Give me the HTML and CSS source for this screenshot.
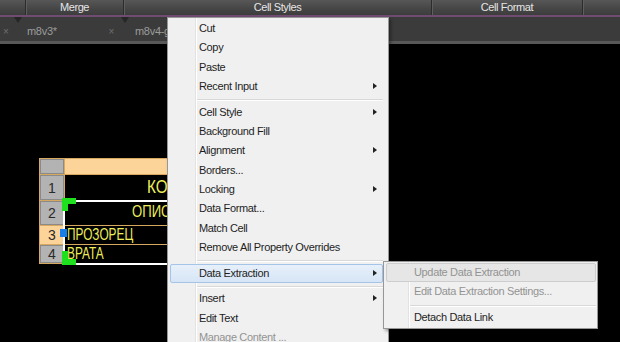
FILE: index.html
```html
<!DOCTYPE html>
<html lang="en">
<head>
    <meta charset="UTF-8">
    <meta name="viewport" content="width=device-width, initial-scale=1.0">
    <title>Table Cell - Context Menu</title>
    <link rel="stylesheet" href="styles.css">
</head>
<body>
    <div class="ribbon">
        <div class="panel panel-edge"></div>
        <div class="panel panel-merge">Merge</div>
        <div class="panel panel-styles">Cell Styles</div>
        <div class="panel panel-format">Cell Format</div>
        <div class="panel panel-rest"></div>
    </div>

    <div class="tabs">
        <div class="tab tab-prev"><span class="tab-close">×</span></div>
        <div class="tab tab-file">m8v3*<span class="tab-close">×</span></div>
        <div class="tab tab-next">m8v4-g</div>
    </div>

    <div class="canvas">
        <div class="sheet">
            <div class="num"></div>
            <div class="cell cell-head"></div>

            <div class="num">1</div>
            <div class="cell cell-title"><span>КО</span></div>

            <div class="num">2</div>
            <div class="cell cell-sub"><span>ОПИС</span></div>

            <div class="num num-active">3</div>
            <div class="cell cell-row"><span>ПРОЗОРЕЦ</span></div>

            <div class="num">4</div>
            <div class="cell cell-row"><span>ВРАТА</span></div>

            <!-- selection frame and grips -->
            <div class="selection"></div>
            <div class="grip grip-top"></div>
            <div class="grip grip-bottom"></div>
            <div class="grip-mid"></div>
        </div>
    </div>

    <div class="menu">
        <div class="item">Cut</div>
        <div class="item">Copy</div>
        <div class="item">Paste</div>
        <div class="item has-sub">Recent Input</div>
        <div class="sep"></div>
        <div class="item has-sub">Cell Style</div>
        <div class="item">Background Fill</div>
        <div class="item has-sub">Alignment</div>
        <div class="item">Borders...</div>
        <div class="item has-sub">Locking</div>
        <div class="item">Data Format...</div>
        <div class="item">Match Cell</div>
        <div class="item">Remove All Property Overrides</div>
        <div class="sep"></div>
        <div class="item has-sub active">Data Extraction</div>
        <div class="sep"></div>
        <div class="item has-sub">Insert</div>
        <div class="item">Edit Text</div>
        <div class="item disabled">Manage Content ...</div>
    </div>

    <div class="menu submenu">
        <div class="item disabled hover">Update Data Extraction</div>
        <div class="item disabled">Edit Data Extraction Settings...</div>
        <div class="sep"></div>
        <div class="item">Detach Data Link</div>
    </div>
</body>
</html>
```

FILE: styles.css
```css
* {
    margin: 0;
    padding: 0;
    box-sizing: border-box;
}

body {
    font-family: "Liberation Sans", Arial, sans-serif;
    background-color: #000;
    width: 620px;
    height: 342px;
    overflow: hidden;
    position: relative;
}

/* ribbon panel titles */
.ribbon {
    display: flex;
    height: 17px;
    background: linear-gradient(#575757, #454545 60%, #3d3d3d);
    border-bottom: 2px solid #6f4c70;
}

.panel {
    height: 15px;
    line-height: 15px;
    font-size: 11px;
    letter-spacing: -0.4px;
    color: #e6e6e6;
    text-align: center;
    border-right: 1px solid #2c2c2c;
    box-shadow: 1px 0 0 #5e5e5e;
}

.panel-edge { width: 26px; }
.panel-merge { width: 98px; }
.panel-styles { width: 308px; }
.panel-format { width: 151px; }
.panel-rest { flex: 1; border-right: none; box-shadow: none; }

/* drawing tabs */
.tabs {
    display: flex;
    height: 27px;
    background-color: #3b3b3b;
    border-bottom: 3px solid #585858;
}

.tab {
    position: relative;
    display: flex;
    align-items: center;
    padding-top: 4px;
    font-size: 11px;
    letter-spacing: -0.3px;
    color: #9c9c9c;
}

.tab::before {
    content: "";
    position: absolute;
    left: -4px;
    top: 0;
    border-top: 6px solid #262626;
    border-left: 4px solid transparent;
    border-right: 4px solid transparent;
}

.tab-prev { width: 18px; padding-left: 3px; }
.tab-prev::before { display: none; }

.tab-file {
    width: 107px;
    padding-left: 9px;
}

.tab-next { padding-left: 10px; }

.tab-close {
    font-size: 10px;
    color: #6e6e6e;
}

.tab-file .tab-close {
    margin-left: auto;
    margin-right: 11px;
}

/* model space with the table */
.canvas {
    height: 300px;
    padding: 114px 0 0 39px;
}

.sheet {
    position: relative;
    display: grid;
    grid-template-columns: 24px 170px;
    grid-template-rows: 15px 25px 24px 18px 18px;
    gap: 1px;
    width: 196px;
    background-color: #d6a860;
    border: 1px solid #d6a860;
}

.num {
    background-color: #b3b3b3;
    box-shadow: inset 0 0 0 1px #8a8a8a;
    color: #2a2a2a;
    font-size: 14px;
    display: flex;
    align-items: center;
    justify-content: center;
}

.num-active {
    background-color: #fcd49a;
    box-shadow: none;
}

.cell {
    background-color: #000;
    color: #eeee5a;
    display: flex;
    align-items: center;
    white-space: nowrap;
    overflow: hidden;
}

.cell span {
    display: inline-block;
    transform-origin: left center;
}

.cell-head { background-color: #fcd49a; }

.cell-title { padding-left: 82px; font-size: 18px; }
.cell-title span { transform: scaleX(0.85); }

.cell-sub { padding-left: 67px; padding-bottom: 2px; font-size: 16px; }
.cell-sub span { transform: scaleX(0.82); }

.cell-row { padding-left: 2px; font-size: 16px; }
.cell-row span { transform: scaleX(0.74); }

.selection {
    position: absolute;
    left: 23px;
    top: 41px;
    width: 180px;
    height: 65px;
    border: 2px solid #fff;
    border-right: none;
}

.grip {
    position: absolute;
    left: 22px;
    width: 14px;
    height: 14px;
}

.grip::before,
.grip::after {
    content: "";
    position: absolute;
    left: 0;
    background-color: #1fe01f;
}

.grip::before { width: 6px; height: 14px; top: 0; }
.grip::after { width: 14px; height: 6px; }

.grip-top { top: 39px; height: 13px; }
.grip-top::before { height: 13px; }
.grip-top::after { top: 0; }

.grip-bottom { top: 92px; }
.grip-bottom::after { bottom: 0; }

.grip-mid {
    position: absolute;
    left: 20px;
    top: 70px;
    width: 7px;
    height: 8px;
    background-color: #1a7ee6;
}

/* context menu */
.menu {
    position: absolute;
    left: 167px;
    top: 17px;
    width: 222px;
    height: 340px;
    padding: 1px 5px 2px 2px;
    background-color: #f0f0f0;
    background-image: linear-gradient(to right, transparent 27px, #e2e2e2 27px, #e2e2e2 28px, #fff 28px, #fff 29px, transparent 29px);
    border: 1px solid #979797;
    box-shadow: 2px 2px 3px rgba(0, 0, 0, 0.35);
    font-size: 11px;
    letter-spacing: -0.35px;
    color: #1e1e1e;
}

.item {
    position: relative;
    height: 19.33px;
    line-height: 19.33px;
    padding-left: 29px;
    white-space: nowrap;
}

.has-sub::after {
    content: "";
    position: absolute;
    right: 6px;
    top: 6px;
    border-left: 4px solid #222;
    border-top: 3.5px solid transparent;
    border-bottom: 3.5px solid transparent;
}

.active {
    background: linear-gradient(#e7f0fa, #d6e5f6);
    border: 1px solid #a4c5e8;
    border-radius: 2px;
    padding-left: 28px;
    line-height: 17.33px;
}

.active::after { top: 5px; right: 5px; }

.disabled { color: #939393; }

.sep {
    height: 6.33px;
    margin-left: 27px;
    padding-top: 3px;
}

.sep::before {
    content: "";
    display: block;
    height: 1px;
    background-color: #d8d8d8;
    box-shadow: 0 1px 0 #fff;
}

.submenu {
    left: 383px;
    top: 261px;
    width: 215px;
    height: 68px;
    padding: 1px 1px 1px 2px;
    background-image: linear-gradient(to right, transparent 24px, #e2e2e2 24px, #e2e2e2 25px, #fff 25px, #fff 26px, transparent 26px);
}

.submenu .item { padding-left: 28px; }

.submenu .sep { margin-left: 24px; }

.hover {
    background-color: #e6e6e6;
    border: 1px solid #cdcdcd;
    border-radius: 2px;
    line-height: 17.33px;
}

.submenu .hover { padding-left: 27px; }
```
